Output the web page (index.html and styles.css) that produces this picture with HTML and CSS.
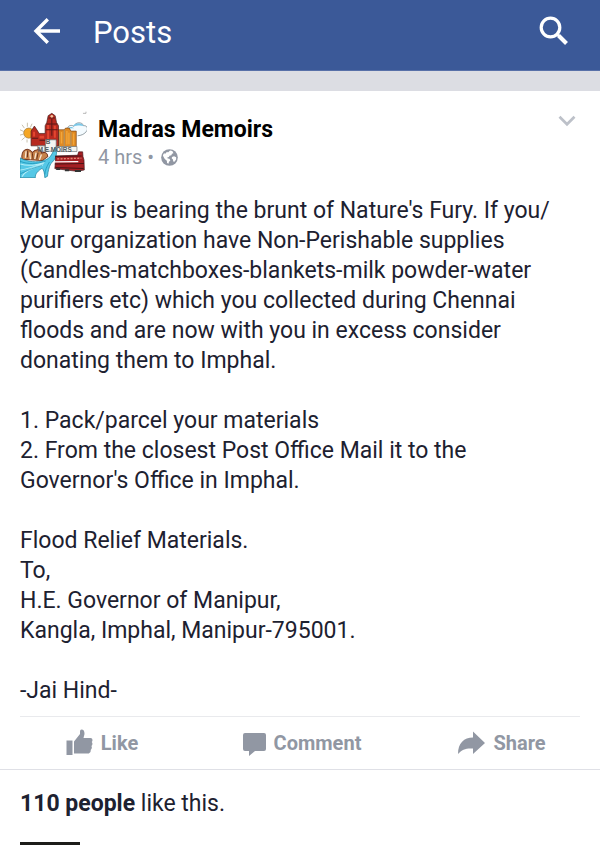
FILE: index.html
```html
<!DOCTYPE html>
<html lang="en">
<head>
<meta charset="utf-8">
<meta name="viewport" content="width=device-width, initial-scale=1">
<title>Posts</title>
<link rel="stylesheet" href="styles.css">
</head>
<body>
<header class="topbar">
  <button class="icon-button" type="button" aria-label="Back">
    <svg width="28" height="28" viewBox="0 0 28 28" fill="none" stroke="#fff" stroke-width="3.4"><path d="M27 14H3M14.8 2.2 3 14l11.8 11.8"/></svg>
  </button>
  <h1 class="title">Posts</h1>
  <button class="icon-button" type="button" aria-label="Search">
    <svg width="30" height="30" viewBox="0 0 30 30" fill="none" stroke="#fff"><circle cx="11.5" cy="11.5" r="9.3" stroke-width="3.2"/><path d="m18.3 18.3 2 2" stroke-width="2.5"/><path d="m19.5 19.5 8 8" stroke-width="4"/></svg>
  </button>
</header>
<main class="feed">
  <article class="post">
    <header class="post-head">
      <svg class="avatar" viewBox="30 32 200 200" role="img" aria-label="Madras Memoirs">
        <path fill="#fff" d="M30 32h200v200H30z"/>
        <path stroke="#a9a184" stroke-width="2" d="M52 67v12M36 73l7 10M66 70l-5 11M30 88l11 5M30 104l10-3M35 119l9-8M51 126v-9"/>
        <circle cx="56" cy="98" r="15" fill="#f5a623" stroke="#9b7a45" stroke-width="2"/>
        <path fill="#f4fbff" stroke="#64747b" stroke-width="2" d="M172 84c1-10 14-11 19-6 4-14 25-14 29-2 10-2 15 10 8 17-5 8-15 12-26 13"/>
        <path fill="#79c7e8" d="M188 78c5-12 27-12 32-1-10-3-19-2-32 1M170 86c7-8 15-8 21-2-8-1-14 0-21 2"/>
        <path fill="none" stroke="#999" stroke-width="2" d="M218 39h9v-5"/>
        <path fill="#e08a22" stroke="#744018" stroke-width="2" d="M139 88h23l4-5h11l5 9h16v48h-59z"/>
        <path stroke="#a8926b" stroke-width="3" d="M147 95v45M162 88v50M182 94v44"/>
        <path stroke="#f2a73b" stroke-width="4" d="M154 95v34M170 92v40M176 97v34M190 99v34"/>
        <path fill="#b72a20" stroke="#45201d" stroke-width="2" d="M63 136V92l10-15 10 15 4 7h18V76l5-10 4-20 11-7 10 7 4 20 6 10v60z"/>
        <path fill="#e44630" d="M69 94h6v14h-6zM88 106h14v8H88zM111 74h6v42h-6zM131 76h6v36h-6z"/>
        <path stroke="#5b1817" stroke-width="3" d="M115 53h19M109 71h32M108 88h34M66 113h18M88 119h52M125 56v50"/>
        <circle cx="125" cy="48" r="4" fill="#f3c39c"/>
        <path fill="#f4f4f0" stroke="#6c7275" stroke-width="2" d="M83 136h21v16H83zM106 118h32v34h-32zM140 138h60v15h-60z"/>
        <path stroke="#75351f" stroke-width="3" fill="#c8844c" d="M36 176c-4-30 18-38 31-20 10-12 26-10 28 2 8-6 18 0 18 10l-16 12z"/>
        <path stroke="#f7e6d2" stroke-width="4" fill="none" d="M48 152l-2 20M59 156l2 20M78 156l-4 20M94 162l-6 16"/>
        <path stroke="#6b3218" stroke-width="3" fill="none" d="M53 150l-1 20M67 158l2 18M84 156l-4 20"/>
        <path fill="#55c8e6" stroke="#167e9b" stroke-width="2" d="M30 172c24 12 50 15 73 7 20-5 24-24 33-40 7 20 2 36-14 50-6 12-8 22-10 38l-8 4c-1-14-2-22-8-28-10 6-22 16-20 28H30z"/>
        <path stroke="#b5eef8" stroke-width="3" fill="none" d="M31 190c24 8 46 5 72-6M31 208c22-2 42-12 70-19M36 228c10-18 30-26 62-34"/>
        <path stroke="#138caf" stroke-width="2" fill="none" d="M30 182c24 10 50 8 76 0M32 219c18-8 38-18 64-24M104 222c2-14 4-22 14-38"/>
        <text class="avatar-label" x="107" y="131">B</text>
        <text class="avatar-label" x="83" y="153">M E MOIRS</text>
        <path fill="#a51f23" stroke="#421719" stroke-width="2" d="M136 166l66-2 3-10h12l1 14 3 10 1 30-22 4-66-8 2-22z"/>
        <path stroke="#fff" stroke-width="4" d="m134 184 70-1"/>
        <path stroke="#e58a78" stroke-width="4" stroke-dasharray="6 4" d="m141 175 72-2"/>
        <path stroke="#4b1517" stroke-width="3" d="m136 168 78-2M134 190l87-1M136 201l84 3"/>
        <path fill="#333" d="M138 203h12v5h-12zM164 206h13v6h-13zM194 208h18v6h-18z"/>
      </svg>
      <div class="byline">
        <h2 class="author">Madras Memoirs</h2>
        <p class="meta">4 hrs <span class="dot">•</span>
          <svg width="17" height="17" viewBox="0 0 18 18" role="img" aria-label="Public"><circle cx="9" cy="9" r="8.8" fill="#9197a3"/><path fill="#fff" d="M9.6 1.6 12 2.2l1.2 2.2-1.6.5-.6 1.7-2 .6-.6 1.3-1.8.4.5 1.2 1.9.2.9 1.9-1.4 1.3-.6 2.2-1.5-1-.2-2.3L4 10.6 2.6 8.3 2 6.6l1.2-2 1.3.3L6.4 3l1 .8zM11.6 8.6l2.2-.8 2.3.9-.1 2.3-1.8 2.6-1.3-.4-.2-2-1.3-1.2z"/></svg>
        </p>
      </div>
      <button class="icon-button more" type="button" aria-label="Post options">
        <svg width="18" height="12" viewBox="0 0 18 12" fill="none" stroke="#bdc1c9" stroke-width="2.7"><path d="m1.5 1.8 7.5 7.5 7.5-7.5"/></svg>
      </button>
    </header>
    <div class="text">
      <p>Manipur is bearing the brunt of Nature's Fury. If you/<br>your organization have Non-Perishable supplies (Candles-matchboxes-blankets-milk powder-water purifiers etc) which you collected during Chennai floods and are now with you in excess consider donating them to Imphal.</p>
      <p>1. Pack/parcel your materials<br>2. From the closest Post Office Mail it to the Governor's Office in Imphal.</p>
      <p>Flood Relief Materials.<br>To,<br>H.E. Governor of Manipur,<br>Kangla, Imphal, Manipur-795001.</p>
      <p>-Jai Hind-</p>
    </div>
  </article>
  <div class="actions">
    <button class="action" type="button">
      <svg width="27" height="28" viewBox="0 0 27 28" fill="currentColor"><path d="M.5 11.500h6V26h-6zM8 12.500l6-7.500V2.400Q14 .6 15.500 .6q3 0 3 4.400l-1 4h7q2 0 2 2 0 1.400-.8 2 1 .8.7 2.200-.1 1.200-1 1.800.7.8.4 2-.2 1.200-1 1.800.4 2.700-2 3.700H8z"/></svg>
      Like
    </button>
    <button class="action" type="button">
      <svg width="23" height="28" viewBox="0 0 23 28" fill="currentColor"><path d="M2 4h19q2 0 2 2v14q0 2-2 2h-9l-6 5V22H2q-2 0-2-2V6q0-2 2-2"/></svg>
      Comment
    </button>
    <button class="action" type="button">
      <svg width="27" height="28" viewBox="0 0 27 28" fill="currentColor"><path d="M15 2.500 27 14 15 25v-5.500C8 19 4 20.500 0 25 0 14 6 8.500 15 8.500z"/></svg>
      Share
    </button>
  </div>
  <p class="likes"><b>110 people</b> like this.</p>
  <div class="commenter"></div>
</main>
</body>
</html>
```
FILE: styles.css
```css
* { box-sizing: border-box; }
body {
  display: flex;
  flex-direction: column;
  min-height: 100vh;
  margin: 0;
  background: #fff;
  color: #1d2130;
  font: 23px/30px Roboto, sans-serif;
}
h1, h2, p { margin: 0; }
button { font: inherit; border: 0; background: none; padding: 0; }
svg { display: block; flex: none; }
.topbar {
  display: flex;
  align-items: center;
  height: 71px;
  padding: 0 31px 8px 33px;
  background: #3b5998;
  border-bottom: 1px solid #5870a8;
}
.icon-button { display: flex; }
.title {
  flex: 1;
  margin-left: 32px;
  padding-top: 3px;
  color: #fff;
  font-size: 31px;
  font-weight: 400;
  line-height: 40px;
}
.feed {
  flex: 1;
  display: flex;
  flex-direction: column;
  border-top: 20px solid #dcdde3;
}
.post { padding: 20px 20px 0; }
.post-head { display: flex; align-items: flex-start; }
.avatar { width: 67px; height: 67px; }
.avatar-label { font: bold 19px "Liberation Sans", sans-serif; fill: #555e62; }
.byline { flex: 1; margin-left: 11px; padding-top: 4px; }
.author { color: #000; font-size: 23px; font-weight: 700; line-height: 30px; }
.meta {
  display: flex;
  align-items: center;
  gap: 5px;
  color: #9197a3;
  font-size: 20px;
  line-height: 24px;
}
.dot { width: 9px; }
.more { margin: 4px 4px 0 0; }
.text { margin-top: 18px; }
.text p { margin-bottom: 30px; }
.text p:last-child { margin-bottom: 10px; }
.actions {
  display: flex;
  height: 54px;
  border-bottom: 1px solid #dfe0e6;
  background: linear-gradient(#e9eaed, #e9eaed) center top / calc(100% - 40px) 1px no-repeat;
}
.action {
  flex: 1;
  display: flex;
  align-items: center;
  justify-content: center;
  gap: 8px;
  padding-left: 4px;
  color: #9197a3;
  font-size: 20px;
  font-weight: 700;
}
.likes { padding: 19px 20px 23px; }
.commenter {
  flex: 1;
  width: 60px;
  min-height: 3px;
  max-height: 60px;
  margin-left: 20px;
  background: #1d1d19;
}
```
